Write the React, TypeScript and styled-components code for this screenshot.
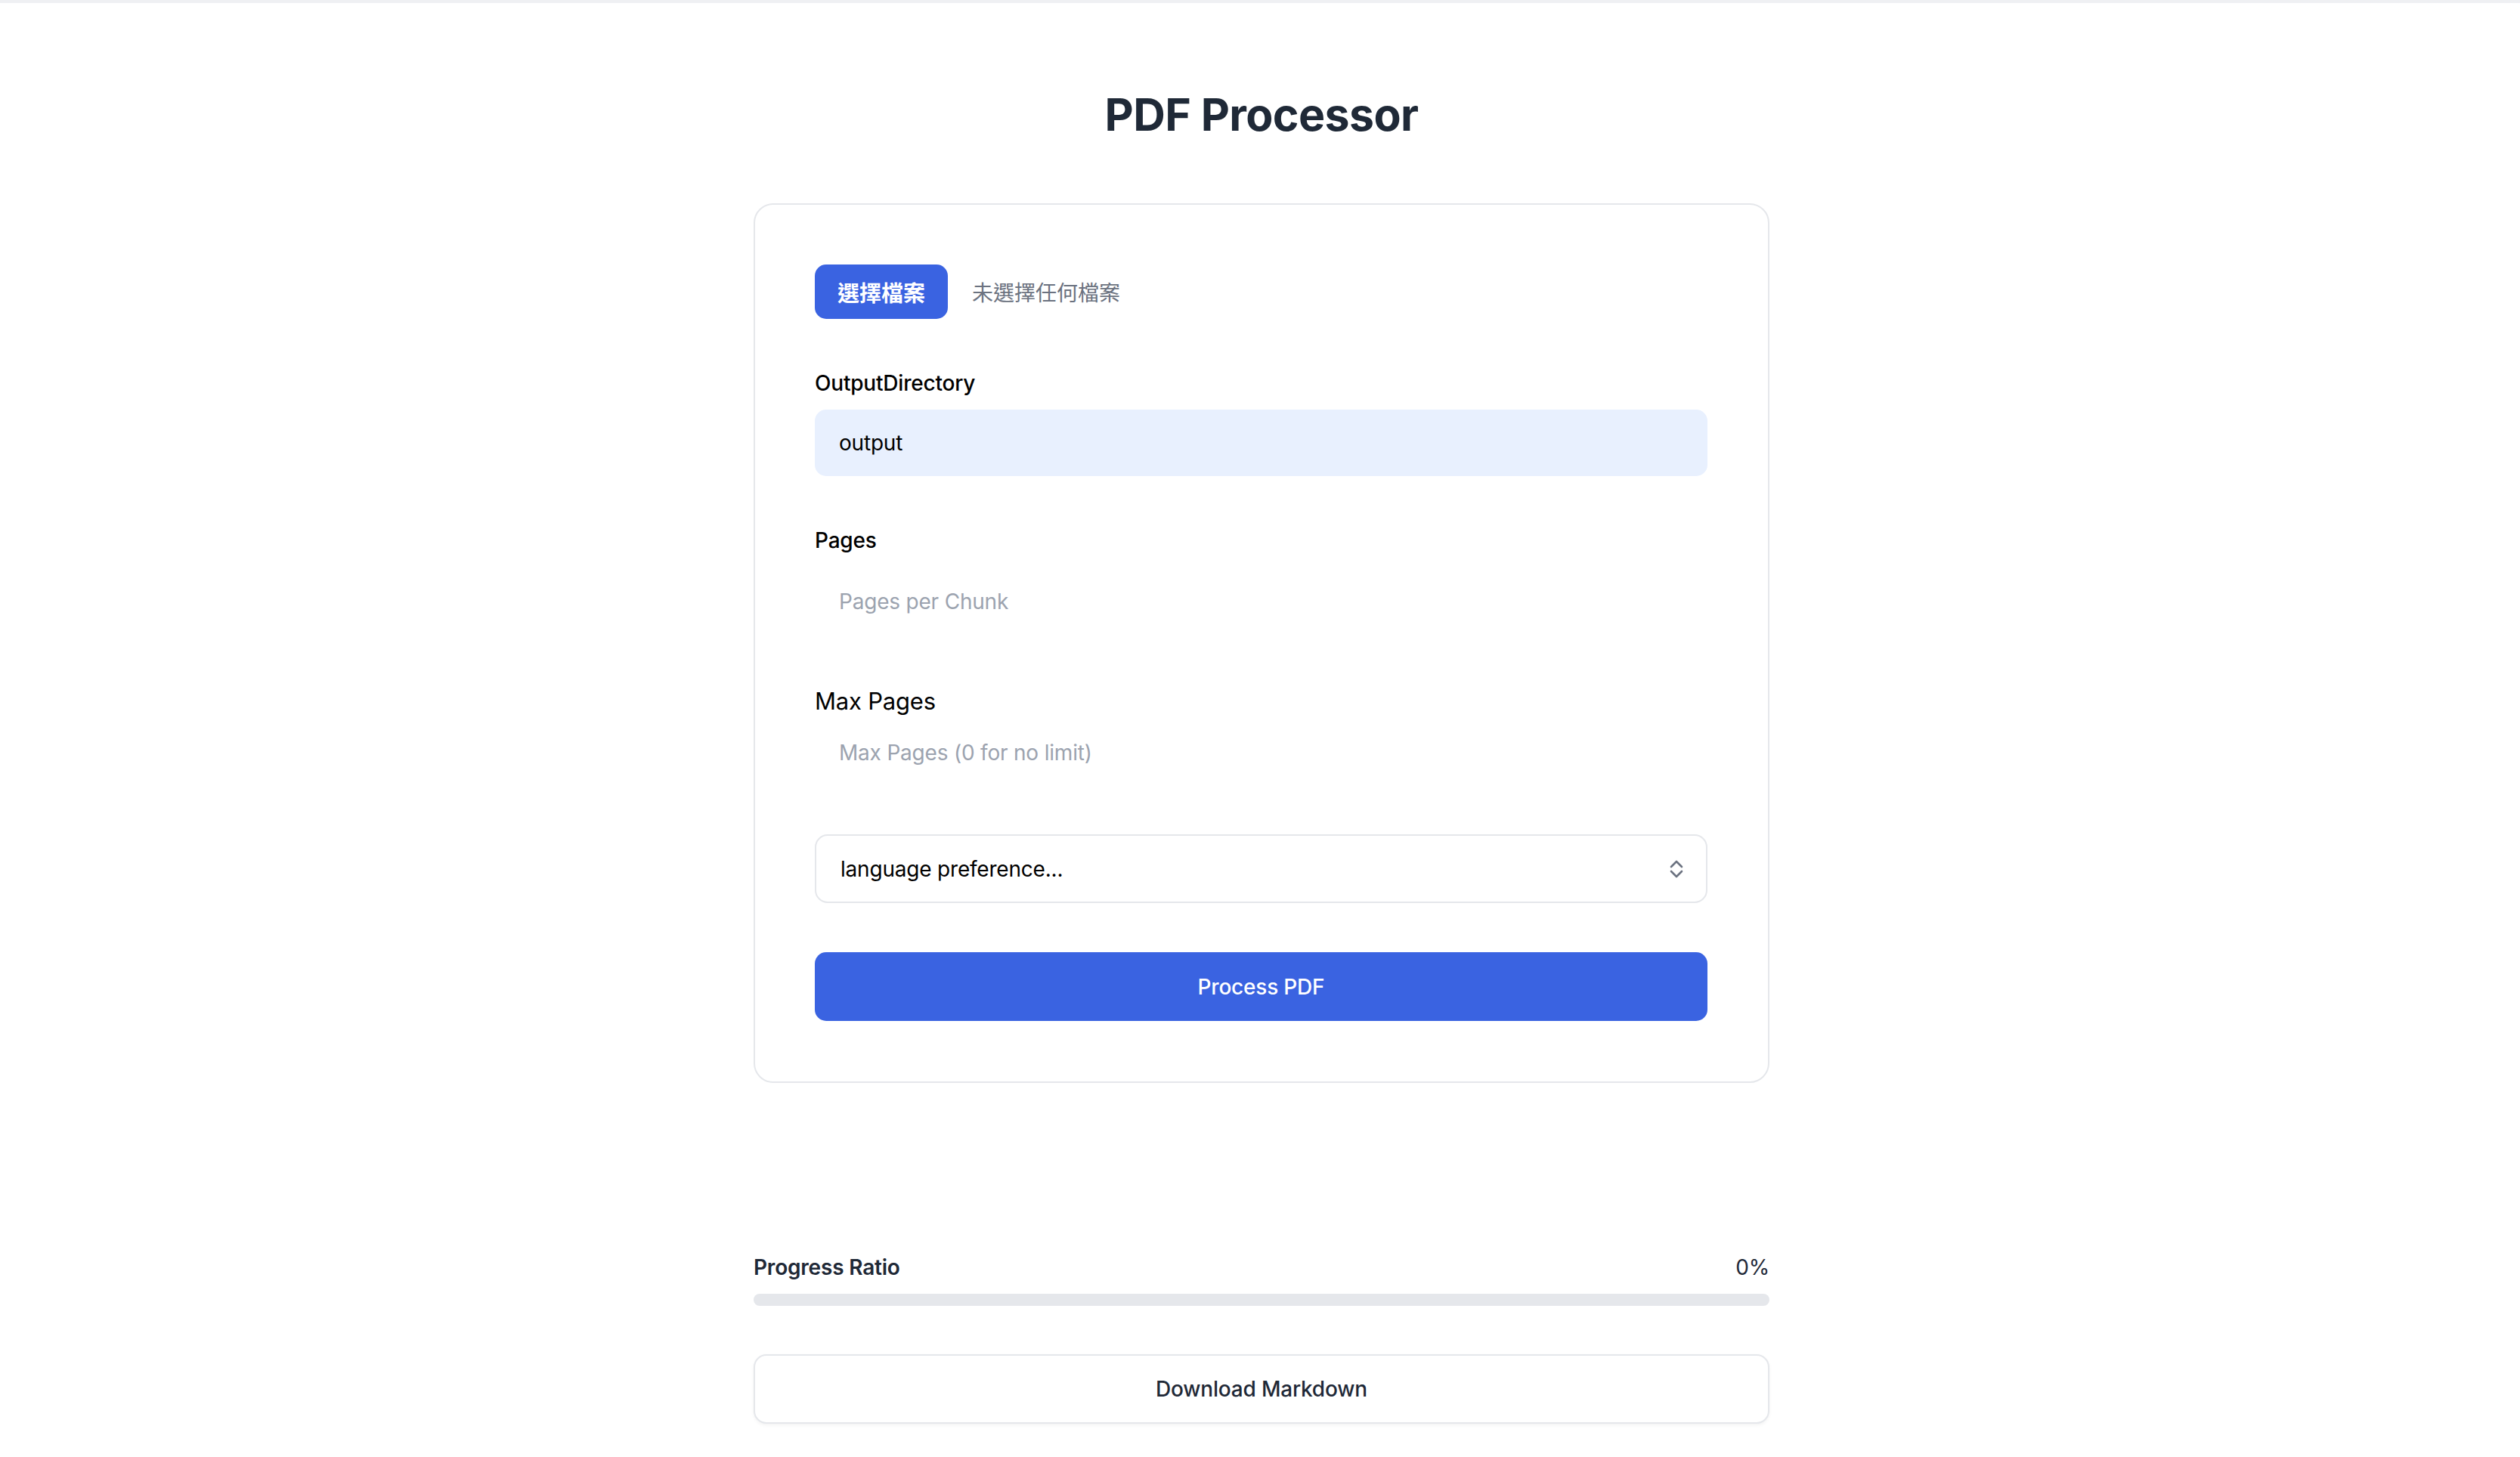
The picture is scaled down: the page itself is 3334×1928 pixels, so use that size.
import styled, { createGlobalStyle } from "styled-components";

const GlobalStyle = createGlobalStyle`
  html, body {
    margin: 0;
    padding: 0;
    background: #ffffff;
  }
  body {
    font-family: "Inter", "Noto Sans CJK TC", "Noto Sans", sans-serif;
    color: #000000;
    -webkit-font-smoothing: antialiased;
  }
`;

const Page = styled.div`
  border-top: 4px solid #eff0f3;
  padding: 108px 0 40px 4px;
`;

const Container = styled.main`
  width: 1344px;
  margin: 0 auto;
  display: flex;
  flex-direction: column;
`;

const Title = styled.h1`
  margin: 0 0 77px;
  font-size: 59px;
  line-height: 80px;
  font-weight: 700;
  letter-spacing: -0.6px;
  text-align: center;
  color: #1f2937;
`;

const Card = styled.section`
  box-sizing: border-box;
  border: 2px solid #e5e7eb;
  border-radius: 26px;
  padding: 79px 80px 80px 79px;
  display: flex;
  flex-direction: column;
`;

const FileRow = styled.div`
  display: flex;
  align-items: center;
  gap: 32px;
  height: 72px;
  margin-bottom: 64px;
`;

const FileButton = styled.label`
  display: inline-flex;
  align-items: center;
  justify-content: center;
  height: 72px;
  padding: 0 30px;
  border-radius: 15px;
  background: #3a63e1;
  color: #ffffff;
  font-size: 29px;
  font-weight: 700;
  cursor: pointer;
`;

const FileStatus = styled.span`
  font-size: 28px;
  color: #6b7280;
`;

const Field = styled.div<{ $gap?: number }>`
  display: flex;
  flex-direction: column;
  gap: ${(p) => p.$gap ?? 14}px;
  margin-bottom: 64px;
`;

const Label = styled.label<{ $large?: boolean }>`
  font-size: ${(p) => (p.$large ? 31 : 28)}px;
  line-height: ${(p) => (p.$large ? 48 : 42)}px;
  font-weight: ${(p) => (p.$large ? 400 : 500)};
  letter-spacing: -0.2px;
  color: #000000;
`;

const TextInput = styled.input<{ $filled?: boolean }>`
  box-sizing: border-box;
  width: 100%;
  height: 88px;
  padding: 0 32px;
  border: none;
  border-radius: 15px;
  outline: none;
  background: ${(p) => (p.$filled ? "#e8f0fe" : "transparent")};
  font-family: inherit;
  font-size: 28px;
  letter-spacing: -0.2px;
  color: #000000;

  &::placeholder {
    color: #9ca3af;
  }
`;

const SelectTrigger = styled.button`
  box-sizing: border-box;
  width: 100%;
  height: 91px;
  margin-bottom: 65px;
  padding: 0 28px 0 32px;
  display: flex;
  align-items: center;
  justify-content: space-between;
  background: #ffffff;
  border: 2px solid #e5e7eb;
  border-radius: 17px;
  font-family: inherit;
  font-size: 28px;
  letter-spacing: -0.2px;
  color: #000000;
  text-align: left;
`;

const PrimaryButton = styled.button`
  width: 100%;
  height: 91px;
  border: none;
  border-radius: 15px;
  background: #3a63e1;
  color: #ffffff;
  font-family: inherit;
  font-size: 28px;
  font-weight: 500;
  letter-spacing: -0.2px;
`;

const Progress = styled.section`
  margin-top: 223px;
  display: flex;
  flex-direction: column;
`;

const ProgressHeader = styled.div`
  display: flex;
  justify-content: space-between;
  align-items: center;
  height: 42px;
  font-size: 28px;
  letter-spacing: -0.2px;
  color: #1f2937;
`;

const ProgressLabel = styled.span`
  font-weight: 600;
`;

const Track = styled.div`
  margin-top: 14px;
  height: 16px;
  border-radius: 999px;
  background: #e5e7eb;
  overflow: hidden;
`;

const Fill = styled.div`
  height: 100%;
  background: #3a63e1;
`;

const SecondaryButton = styled.button`
  margin-top: 64px;
  width: 100%;
  height: 92px;
  background: #ffffff;
  border: 2px solid #e5e7eb;
  border-radius: 17px;
  box-shadow: 0 2px 4px rgba(0, 0, 0, 0.05);
  font-family: inherit;
  font-size: 28px;
  font-weight: 500;
  letter-spacing: -0.2px;
  color: #1f2937;
`;

function UpDownIcon() {
  return (
    <svg width="22" height="26" viewBox="0 0 22 26" fill="none">
      <polyline
        points="4,10 11,3 18,10"
        stroke="#6b7280"
        strokeWidth="2.6"
        strokeLinecap="round"
        strokeLinejoin="round"
      />
      <polyline
        points="4,16 11,23 18,16"
        stroke="#6b7280"
        strokeWidth="2.6"
        strokeLinecap="round"
        strokeLinejoin="round"
      />
    </svg>
  );
}

export default function App() {
  const progress = 0;

  return (
    <Page>
      <GlobalStyle />
      <Container>
        <Title>PDF Processor</Title>

        <Card>
          <FileRow>
            <FileButton>
              選擇檔案
              <input type="file" accept="application/pdf" hidden />
            </FileButton>
            <FileStatus>未選擇任何檔案</FileStatus>
          </FileRow>

          <Field>
            <Label>OutputDirectory</Label>
            <TextInput $filled defaultValue="output" />
          </Field>

          <Field $gap={16}>
            <Label>Pages</Label>
            <TextInput type="number" placeholder="Pages per Chunk" />
          </Field>

          <Field $gap={0}>
            <Label $large>Max Pages</Label>
            <TextInput type="number" placeholder="Max Pages (0 for no limit)" />
          </Field>

          <SelectTrigger type="button">
            <span>language preference...</span>
            <UpDownIcon />
          </SelectTrigger>

          <PrimaryButton type="button">Process PDF</PrimaryButton>
        </Card>

        <Progress>
          <ProgressHeader>
            <ProgressLabel>Progress Ratio</ProgressLabel>
            <span>{progress}%</span>
          </ProgressHeader>
          <Track>
            <Fill style={{ width: `${progress}%` }} />
          </Track>
          <SecondaryButton type="button">Download Markdown</SecondaryButton>
        </Progress>
      </Container>
    </Page>
  );
}
